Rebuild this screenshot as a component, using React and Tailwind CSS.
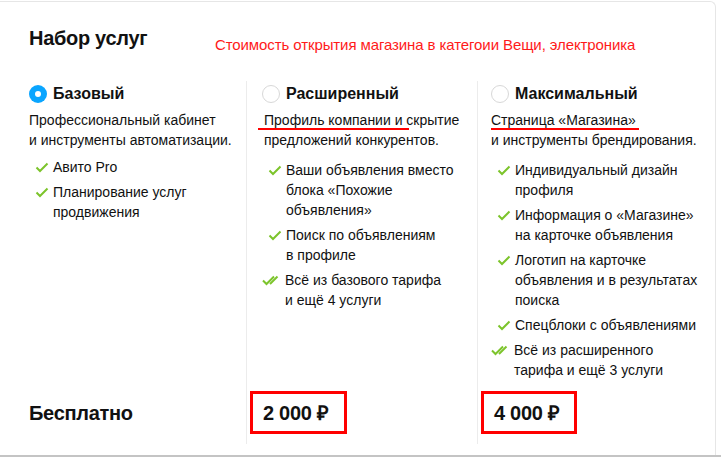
import React from 'react';

const Check = () => (
  <svg width="14" height="11" viewBox="0 0 14 11" className="shrink-0 mt-[5px]">
    <path d="M1.5 5.5 L5 9 L12.5 1.5" fill="none" stroke="#7cc42b" strokeWidth="2" />
  </svg>
);

const DoubleCheck = () => (
  <svg width="19" height="11" viewBox="0 0 19 11" className="shrink-0 mt-[5px]">
    <path d="M1 5.5 L4.5 9 L12 1.5" fill="none" stroke="#7cc42b" strokeWidth="2" />
    <path d="M8 9 L15.5 1.5" fill="none" stroke="#7cc42b" strokeWidth="2" />
  </svg>
);

const plans = [
  {
    name: 'Базовый',
    selected: true,
    desc: ['Профессиональный кабинет', 'и инструменты автоматизации.'],
    features: [
      { t: 'Авито Pro' },
      { t: 'Планирование услуг продвижения' },
    ],
    price: 'Бесплатно',
  },
  {
    name: 'Расширенный',
    desc: ['Профиль компании и скрытие', 'предложений конкурентов.'],
    underline: 'w-[151px] left-[-4px]',
    features: [
      { t: <>Ваши объявления вместо<br />блока «Похожие<br />объявления»</> },
      { t: <>Поиск по объявлениям<br />в профиле</> },
      { t: <>Всё из базового тарифа<br />и ещё 4 услуги</>, double: true },
    ],
    price: '2 000 ₽',
    box: 'mt-[1px] -ml-[12px] pr-[15px]',
  },
  {
    name: 'Максимальный',
    desc: ['Страница «Магазина»', 'и инструменты брендирования.'],
    underline: 'w-[148px] left-0',
    features: [
      { t: <>Индивидуальный дизайн<br />профиля</> },
      { t: <>Информация о «Магазине»<br />на карточке объявления</> },
      { t: <>Логотип на карточке<br />объявления и в результатах<br />поиска</> },
      { t: 'Спецблоки с объявлениями' },
      { t: <>Всё из расширенного<br />тарифа и ещё 3 услуги</>, double: true },
    ],
    price: '4 000 ₽',
    box: 'mt-[5px] -ml-[10px] pr-[14px]',
  },
];

export default function App() {
  return (
    <div className="w-[721px] h-[458px] bg-white font-['Liberation_Sans',Arial,sans-serif] text-[#111]">
      <div className="w-[716px] h-[454px] mt-px border-t border-r border-[#e6e6e6] rounded-tr-md">
        <div className="flex items-start pl-[29px] pt-[24px] h-[79px]">
          <h1 className="text-[20px] leading-[24px] font-bold tracking-[-0.3px] w-[186px]">Набор услуг</h1>
          <span className="text-[15px] leading-[22px] mt-[8px] tracking-[-0.1px] text-[#ff1a1a]">Стоимость открытия магазина в категоии Вещи, электроника</span>
        </div>
        <div className="flex h-[363px]">
          {plans.map((p, i) => (
            <div
              key={p.name}
              className={
                i === 0
                  ? 'w-[246px] pl-[29px] flex flex-col'
                  : i === 1
                  ? 'w-[231px] pl-[15px] border-l border-[#ececec] flex flex-col'
                  : 'flex-1 pl-[13px] border-l border-[#ececec] flex flex-col'
              }
            >
              <div className="flex items-center gap-[6px] mt-[4px] h-[18px]">
                {p.selected ? (
                  <span className="w-[18px] h-[18px] rounded-full bg-[#0aa5ff] flex items-center justify-center">
                    <span className="w-[6px] h-[6px] rounded-full bg-white" />
                  </span>
                ) : (
                  <span className="w-[18px] h-[18px] rounded-full border border-[#d8d8d8]" />
                )}
                <span className="text-[16px] font-bold">{p.name}</span>
              </div>
              <div className="relative mt-[7px] text-[14px] leading-[20px]">
                <div className={i === 1 ? 'pl-[2px]' : ''}>{p.desc[0]}</div>
                <div className={i === 1 ? 'pl-[2px]' : ''}>{p.desc[1]}</div>
                {p.underline && (
                  <div className={`absolute top-[18px] h-[2px] bg-[#ff0000] ${p.underline}`} />
                )}
              </div>
              <ul className={`flex flex-col gap-[5px] text-[14px] leading-[20px] ${i === 0 ? 'mt-[7px]' : 'mt-[10px]'}`}>
                {p.features.map((f, j) => (
                  <li key={j} className={`flex ${f.double ? 'gap-[4px]' : 'gap-[4px] pl-[6px]'}`}>
                    {f.double ? <DoubleCheck /> : <Check />}
                    <span className={i === 0 ? 'w-[160px]' : ''}>{f.t}</span>
                  </li>
                ))}
              </ul>
              <div className="mt-auto mb-[10px]">
                {i === 0 ? (
                  <div className="text-[20px] font-bold tracking-[-0.3px] h-[43px] flex items-center mt-[2px]">{p.price}</div>
                ) : (
                  <div className={`inline-flex items-center h-[43px] border-[3px] border-[#ff0000] text-[20px] font-bold tracking-[-0.3px] pl-[10px] ${p.box}`}>
                    {p.price}
                  </div>
                )}
              </div>
            </div>
          ))}
        </div>
      </div>
      <div className="h-[2px] bg-[#c4c4c4]" />
    </div>
  );
}
